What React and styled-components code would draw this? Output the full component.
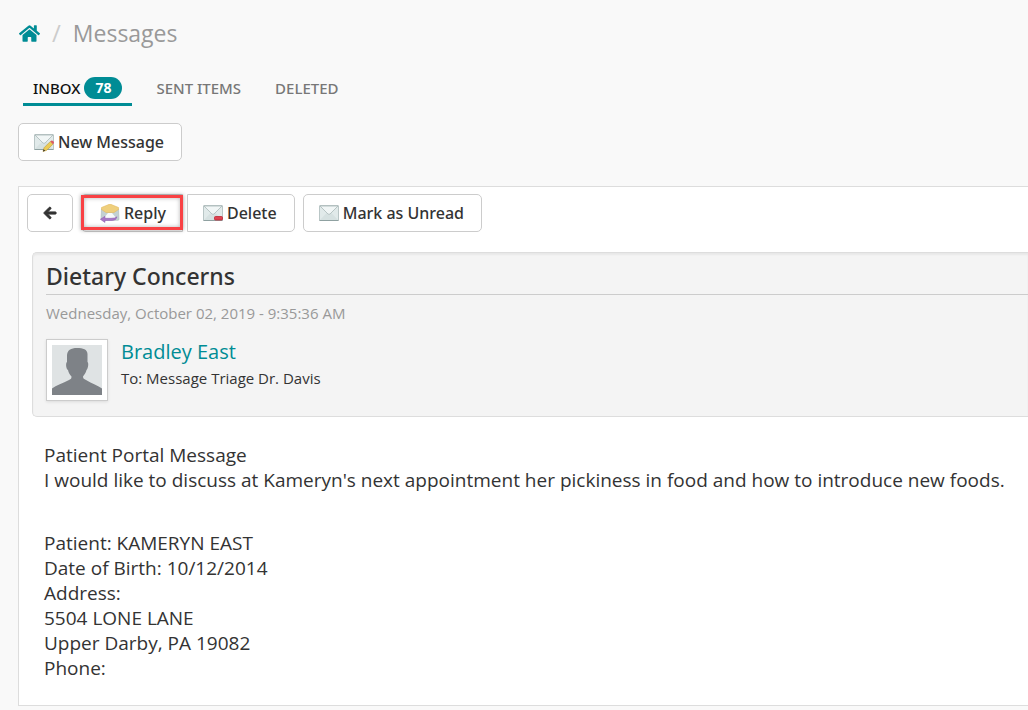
import React from 'react';
import styled, { createGlobalStyle, css } from 'styled-components';
import { FaArrowLeft, FaHome } from 'react-icons/fa';

const colors = {
  teal: '#008c95',
  page: '#f9f9f9',
  text: '#333333',
  muted: '#999999',
  border: '#cccccc',
  panelBorder: '#dddddd',
  highlight: '#f94144',
};

const fonts = {
  body: "'Open Sans', 'Noto Sans', sans-serif",
  medium: "'Noto Sans', 'Open Sans', sans-serif",
};

const GlobalStyle = createGlobalStyle`
  * {
    box-sizing: border-box;
  }

  body {
    margin: 0;
    background: ${colors.page};
    color: ${colors.text};
    font-family: ${fonts.body};
    font-size: 15px;
    line-height: 20px;
  }
`;

const ClosedEnvelope = () => (
  <g>
    <rect x="0.5" y="1.5" width="19" height="15" rx="0.5" fill="#e1eaea" stroke="#b9c6c6" />
    <path d="M1 16 L7.5 9 L10 11 L12.5 9 L19 16 Z" fill="#d6e1e1" />
    <path d="M1 2 L9 10 Q10 10.8 11 10 L19 2 Z" stroke="#a9b9b9" strokeWidth="0.8" fill="#f1f6f6" />
    <path d="M0.5 16.5 H19.5" stroke="#8fa1a1" />
  </g>
);

const OpenEnvelope = () => (
  <g>
    <path d="M1.5 5 H18.5 L19 15 Q19 16.3 18 16.3 H2.5 L1 15 Z" fill="#c3d1d2" stroke="#a9b9b9" strokeWidth="0.6" />
    <path d="M1.5 3.5 L10 0 L18.5 3.5 V5.5 L14 8.5 H6 L1.5 5.5 Z" fill="#efcf7c" stroke="#e2ba60" strokeWidth="0.6" />
    <path d="M3.5 14.5 L8 9 H12 L16.5 14.5 Z" fill="#f7fafa" />
    <path d="M0.3 15.3 L5 12.3 V14.3 H11 Q15 14.3 17 12.8 Q16.5 16.5 12 16.5 H5 V18.5 Z" fill="#a878c6" stroke="#8b5caf" strokeWidth="0.5" />
  </g>
);

const Pencil = () => (
  <g>
    <path d="M9 18.5 L10 14.8 L16.3 8.5 L19 11.2 L12.7 17.3 Z" fill="#ebcb55" stroke="#c09a3b" strokeWidth="0.6" />
    <path d="M16.3 8.5 L17.5 7.5 Q20 7.5 20 10 L19 11.2 Z" fill="#dc5a62" />
    <path d="M9 18.5 L9.6 16.2 L11.3 17.8 Z" fill="#33302a" />
  </g>
);

const MailIcon = ({ kind }) => (
  <Icon viewBox="0 0 20 19" aria-hidden="true">
    {kind === 'reply' ? <OpenEnvelope /> : <ClosedEnvelope />}
    {kind === 'compose' && <Pencil />}
    {kind === 'delete' && (
      <rect x="11.5" y="12.5" width="8" height="3.5" rx="1" fill="#de4350" stroke="#bf2635" strokeWidth="0.8" />
    )}
  </Icon>
);

const App = () => (
  <Page>
    <GlobalStyle />

    <Breadcrumb aria-label="Breadcrumb">
      <HomeLink href="#home" aria-label="Home">
        <FaHome />
      </HomeLink>
      <Separator>/</Separator>
      <PageTitle>Messages</PageTitle>
    </Breadcrumb>

    <Tabs>
      <Tab href="#inbox" $active>
        INBOX <Badge>78</Badge>
      </Tab>
      <Tab href="#sent">SENT ITEMS</Tab>
      <Tab href="#deleted">DELETED</Tab>
    </Tabs>

    <Button type="button">
      <MailIcon kind="compose" />
      New Message
    </Button>

    <Panel>
      <Toolbar>
        <ButtonGroup>
          <BackButton type="button" aria-label="Back">
            <FaArrowLeft />
          </BackButton>
        </ButtonGroup>
        <ButtonGroup>
          <Button type="button" $side="left">
            <MailIcon kind="reply" />
            Reply
            <Highlight />
          </Button>
          <Button type="button" $side="right">
            <MailIcon kind="delete" />
            Delete
          </Button>
        </ButtonGroup>
        <Button type="button">
          <MailIcon kind="mail" />
          Mark as Unread
        </Button>
      </Toolbar>

      <MessageHeader>
        <Subject>Dietary Concerns</Subject>
        <SentDate>Wednesday, October 02, 2019 - 9:35:36 AM</SentDate>
        <Sender>
          <Avatar viewBox="0 0 50 50" role="img" aria-label="Bradley East">
            <rect width="50" height="50" fill="#dfe3e4" />
            <path
              d="M25 3 C31 3 35.5 4.5 35.5 9 V17 C37 18 36 24 34.5 25 C34 28 32 30 31 31.5 C31 33.5 32 34 34 35 C40 38.5 46 40.5 50 43.5 V50 H0 V43.5 C4 40.5 11 38 17 35 C19 34 19.5 33.5 19.5 31.5 C18 30 16.5 28 16 25 C14 24 13.500 18 15 17 V11 C15 5 19 3 25 3 Z"
              fill="#7e8287"
            />
          </Avatar>
          <div>
            <SenderLink href="#sender">Bradley East</SenderLink>
            <Recipient>To: Message Triage Dr. Davis</Recipient>
          </div>
        </Sender>
      </MessageHeader>

      <Message>
        <Paragraph>
          Patient Portal Message
          <br />
          I would like to discuss at Kameryn's next appointment her pickiness in food and how to introduce new foods.
        </Paragraph>
        <Paragraph>
          Patient: KAMERYN EAST
          <br />
          Date of Birth: 10/12/2014
          <br />
          Address:
          <br />
          5504 LONE LANE
          <br />
          Upper Darby, PA 19082
          <br />
          Phone:
        </Paragraph>
      </Message>
    </Panel>
  </Page>
);

const Page = styled.main`
  padding: 16px 0 4px 18px;
`;

const Breadcrumb = styled.nav`
  display: flex;
  align-items: center;
  height: 34px;
  font-size: 24px;
`;

const HomeLink = styled.a`
  display: flex;
  margin-left: 1px;
  color: ${colors.teal};
  font-size: 21px;
`;

const Separator = styled.span`
  margin: 0 12px;
  color: ${colors.border};
`;

const PageTitle = styled.h1`
  margin: 0;
  color: ${colors.muted};
  font-size: 23px;
  font-weight: 400;
`;

const Tabs = styled.nav`
  display: flex;
  gap: 14px;
  margin: 22px 0 17px 5px;
`;

const Tab = styled.a`
  display: flex;
  align-items: center;
  gap: 4px;
  height: 34px;
  padding: 0 10px;
  border-bottom: 3px solid ${props => (props.$active ? colors.teal : 'transparent')};
  color: ${props => (props.$active ? '#111111' : '#777777')};
  font-family: ${fonts.medium};
  font-weight: 500;
  text-decoration: none;
`;

const Badge = styled.span`
  padding: 1px 11px;
  border-radius: 11px;
  background: ${colors.teal};
  color: #ffffff;
  font-family: ${fonts.body};
  font-size: 14px;
  font-weight: 700;
`;

const Button = styled.button`
  display: inline-flex;
  align-items: center;
  gap: 4px;
  height: 38px;
  padding: 0 17px 0 15px;
  border: 1px solid ${colors.border};
  border-radius: 5px;
  background: #ffffff;
  color: ${colors.text};
  font-family: ${fonts.medium};
  font-size: 16px;
  font-weight: 500;
  line-height: 20px;
  white-space: nowrap;

  ${props => props.$side === 'left' && css`
    position: relative;
    padding: 0 16px 0 18px;
    border-radius: 5px 0 0 5px;
  `}

  ${props => props.$side === 'right' && css`
    border-radius: 0 5px 5px 0;
  `}
`;

const BackButton = styled(Button)`
  padding: 0 15px;

  svg {
    width: 14px;
    height: 14px;
    overflow: visible;
    stroke: currentColor;
    stroke-width: 36px;
  }
`;

const Icon = styled.svg`
  width: 20px;
  height: 19px;
`;

const Highlight = styled.span`
  position: absolute;
  inset: 0 -1px 1px;
  border: 3px solid ${colors.highlight};
  box-shadow: 0 0 4px rgba(0, 0, 0, 0.4), inset 0 0 4px rgba(0, 0, 0, 0.3);
  pointer-events: none;
`;

const Panel = styled.section`
  margin-top: 25px;
  border: 1px solid ${colors.panelBorder};
  border-right: 0;
  background: #ffffff;
`;

const Toolbar = styled.div`
  display: flex;
  gap: 8px;
  padding: 7px 8px 20px;
`;

const ButtonGroup = styled.div`
  display: flex;
  gap: 4px;
`;

const MessageHeader = styled.header`
  margin-left: 13px;
  padding: 7px 0 15px 13px;
  border: 1px solid ${colors.panelBorder};
  border-right: 0;
  border-radius: 5px 0 0 5px;
  background: #f4f4f4;
  box-shadow: inset 0 2px 2px rgba(0, 0, 0, 0.05);
`;

const Subject = styled.h2`
  margin: 0;
  padding-bottom: 2px;
  border-bottom: 1px solid ${colors.border};
  font-family: ${fonts.medium};
  font-size: 23px;
  font-weight: 500;
  line-height: 32px;
`;

const SentDate = styled.p`
  margin: 8px 0 16px;
  color: ${colors.muted};
`;

const Sender = styled.div`
  display: flex;
  gap: 13px;
`;

const Avatar = styled.svg`
  width: 62px;
  height: 62px;
  padding: 5px;
  border: 1px solid ${colors.border};
  background: #ffffff;
  box-shadow: 0 1px 3px rgba(0, 0, 0, 0.1);
`;

const SenderLink = styled.a`
  color: ${colors.teal};
  font-size: 20px;
  line-height: 26px;
  text-decoration: none;
`;

const Recipient = styled.p`
  margin: 3px 0 0;
`;

const Message = styled.div`
  padding: 26px 16px 24px 25px;
  font-size: 19px;
  line-height: 25px;
`;

const Paragraph = styled.p`
  margin: 0;

  & + & {
    margin-top: 38px;
  }
`;

export default App;
